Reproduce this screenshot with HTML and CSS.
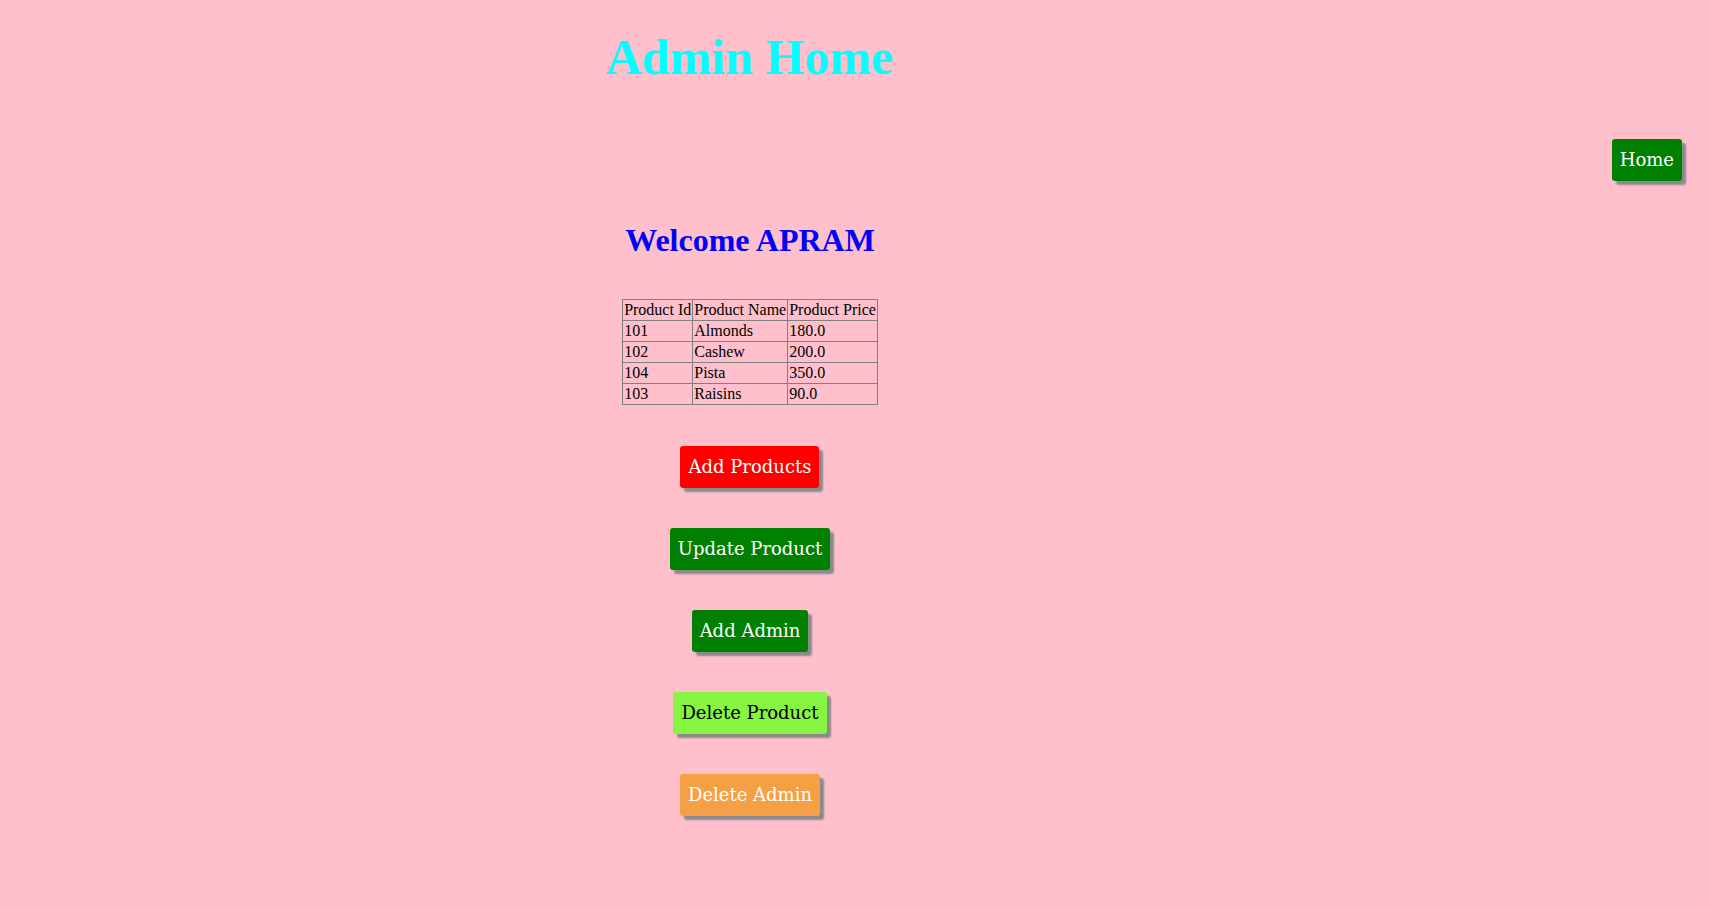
FILE: index.html
```html
<!DOCTYPE html>
<html>
<head>
<meta charset="utf-8">
<title>Admin Home</title>
<link rel="stylesheet" href="styles.css">
</head>
<body>
<header class="header">
  <h1 class="title">Admin Home</h1>
</header>
<nav class="nav">
  <a class="btn btn-green" href="#">Home</a>
</nav>
<main class="main">
  <h2 class="welcome">Welcome APRAM</h2>
  <table class="products">
    <tr><td>Product Id</td><td>Product Name</td><td>Product Price</td></tr>
    <tr><td>101</td><td>Almonds</td><td>180.0</td></tr>
    <tr><td>102</td><td>Cashew</td><td>200.0</td></tr>
    <tr><td>104</td><td>Pista</td><td>350.0</td></tr>
    <tr><td>103</td><td>Raisins</td><td>90.0</td></tr>
  </table>
  <div class="actions">
    <a class="btn btn-red" href="#">Add Products</a>
    <a class="btn btn-green" href="#">Update Product</a>
    <a class="btn btn-green" href="#">Add Admin</a>
    <a class="btn btn-lime" href="#">Delete Product</a>
    <a class="btn btn-orange" href="#">Delete Admin</a>
  </div>
</main>
</body>
</html>
```
FILE: styles.css
```css
html, body {
  margin: 0;
  padding: 0;
}
body {
  background: #ffc0cb;
  font-family: "Liberation Serif", "Times New Roman", serif;
  color: #000;
  min-height: 907px;
}
.header {
  width: 1500px;
  padding-top: 29px;
  display: flex;
  justify-content: center;
}
.title {
  margin: 0;
  font-size: 50px;
  line-height: 57px;
  font-weight: bold;
  color: #00ffff;
}
.nav {
  display: flex;
  justify-content: flex-end;
  padding-right: 28px;
  margin-top: 53px;
}
.main {
  width: 1500px;
  display: flex;
  flex-direction: column;
  align-items: center;
  padding-top: 41px;
}
.welcome {
  margin: 0;
  font-size: 32px;
  line-height: 37px;
  font-weight: bold;
  color: #0000ff;
}
.products {
  margin-top: 40px;
  border-collapse: collapse;
  font-size: 16px;
}
.products td {
  border: 1px solid #808080;
  padding: 1px 1px;
  line-height: 18px;
  text-align: left;
}
.actions {
  margin-top: 41px;
  display: flex;
  flex-direction: column;
  align-items: center;
  gap: 40px;
}
.btn {
  display: inline-block;
  font-family: "DejaVu Serif", Georgia, serif;
  font-size: 18px;
  line-height: 22px;
  padding: 10px 8px;
  color: #fff;
  text-decoration: none;
  border-radius: 3px;
  box-shadow: 4px 4px 2px #8a8a8a;
}
.btn-green { background: #008000; }
.btn-red { background: #ff0000; }
.btn-lime { background: #86f442; color: #000; }
.btn-orange { background: #f5a045; }
```
